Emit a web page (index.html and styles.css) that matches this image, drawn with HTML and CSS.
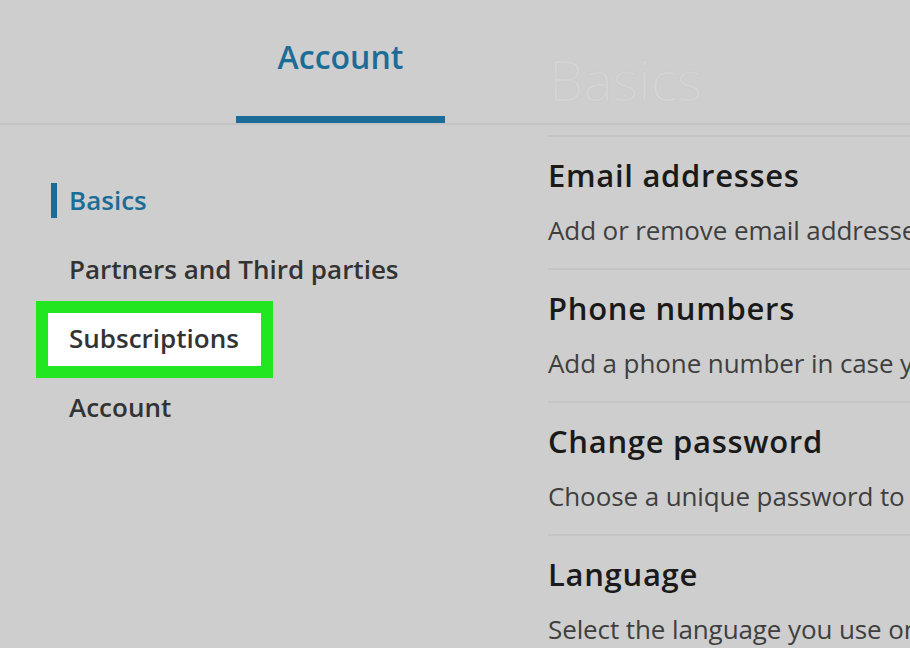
FILE: index.html
```html
<!DOCTYPE html>
<html lang="en">
<head>
<meta charset="utf-8">
<title>Settings – Account</title>
<link rel="stylesheet" href="styles.css">
</head>
<body>
<div class="page">
  <header class="topbar">
    <div class="tab tab-active">Account</div>
    <div class="ghost-title">Basics</div>
  </header>
  <main class="main">
    <nav class="sidenav">
      <ul class="nav-list">
        <li class="nav-item active">Basics</li>
        <li class="nav-item">Partners and Third parties</li>
        <li class="nav-item highlight">Subscriptions</li>
        <li class="nav-item">Account</li>
      </ul>
    </nav>
    <section class="settings">
      <div class="row">
        <h2 class="row-title">Email addresses</h2>
        <p class="row-desc">Add or remove email addresses on your account</p>
      </div>
      <div class="row">
        <h2 class="row-title">Phone numbers</h2>
        <p class="row-desc">Add a phone number in case you have trouble signing in</p>
      </div>
      <div class="row">
        <h2 class="row-title">Change password</h2>
        <p class="row-desc">Choose a unique password to protect your account</p>
      </div>
      <div class="row">
        <h2 class="row-title">Language</h2>
        <p class="row-desc">Select the language you use on LinkedIn</p>
      </div>
    </section>
  </main>
</div>
</body>
</html>
```
FILE: styles.css
```css
html, body {
  margin: 0;
  padding: 0;
  overflow: hidden;
  background: #cecece;
}
body {
  width: 910px;
  height: 648px;
  font-family: "Open Sans", "Noto Sans", "Liberation Sans", sans-serif;
}
.page {
  width: 910px;
  height: 648px;
  overflow: hidden;
}
.topbar {
  display: flex;
  height: 123px;
  border-bottom: 2px solid #c3c3c3;
}
.tab {
  box-sizing: border-box;
  margin-left: 236px;
  width: 209px;
  height: 123px;
  padding-top: 37px;
  text-align: center;
  font-size: 32px;
  line-height: 40px;
  font-weight: 600;
  color: #1b6c96;
  letter-spacing: 0;
}
.tab-active {
  border-bottom: 7px solid #1b6c96;
}
.ghost-title {
  margin-left: 104px;
  padding-top: 52px;
  font-size: 55px;
  line-height: 56px;
  font-weight: 300;
  color: #d3d3d3;
  text-shadow: 0 0 1px #bfbfbf;
  white-space: nowrap;
}
.main {
  display: grid;
  grid-template-columns: 548px 600px;
}
.sidenav {
  padding-top: 41px;
}
.nav-list {
  list-style: none;
  margin: 0;
  padding: 0 0 0 69px;
}
.nav-item {
  position: relative;
  z-index: 0;
  height: 69px;
  line-height: 69px;
  font-size: 26px;
  font-weight: 600;
  color: #333333;
  white-space: nowrap;
  letter-spacing: 0;
}
.nav-item.active {
  color: #1b6c96;
}
.nav-item.active::before {
  content: "";
  position: absolute;
  left: -18px;
  top: 17px;
  width: 6px;
  height: 35px;
  background: #1b6c96;
}
.nav-item.highlight::before {
  content: "";
  position: absolute;
  z-index: -1;
  left: -33px;
  top: -3px;
  width: 237px;
  height: 77px;
  box-sizing: border-box;
  border: 12px solid #22e61f;
  background: #ffffff;
}
.settings {
  margin-top: 10px;
}
.row {
  border-top: 2px solid #c4c4c4;
  padding: 18px 0 21px 0;
}
.row-title {
  margin: 0;
  font-size: 31px;
  line-height: 40px;
  font-weight: 600;
  color: #1a1a1a;
  white-space: nowrap;
  letter-spacing: 0.7px;
}
.row-desc {
  margin: 18px 0 0 0;
  font-size: 26px;
  line-height: 34px;
  font-weight: 400;
  color: #3f3f3f;
  white-space: nowrap;
  letter-spacing: -0.1px;
}
```
